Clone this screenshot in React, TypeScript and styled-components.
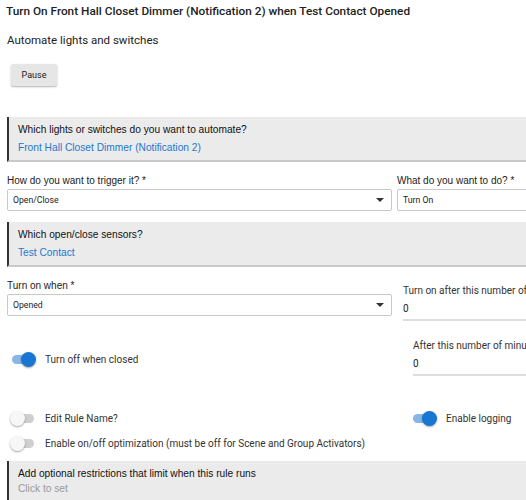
import React from 'react'
import styled, { createGlobalStyle } from 'styled-components'

const GlobalStyle = createGlobalStyle`
  *, *::before, *::after {
    box-sizing: border-box;
  }
  html, body {
    margin: 0;
    padding: 0;
    background: #fff;
    overflow: hidden;
  }
  body {
    font-family: Roboto, "Liberation Sans", Arial, sans-serif;
    color: #222;
  }
`

const Page = styled.div`
  width: 760px;
  padding: 0 0 0 7px;
`

const Title = styled.h1`
  margin: 0 0 0 -1px;
  padding-top: 3px;
  font-size: 11.8px;
  line-height: 16px;
  font-weight: 500;
  color: #222;
`

const Subtitle = styled.div`
  margin-top: 11px;
  font-size: 11.5px;
  line-height: 20px;
  color: #222;
`

const PauseButton = styled.button`
  display: block;
  margin: 14px 0 0 4px;
  width: 46px;
  height: 22px;
  border: none;
  border-radius: 2px;
  background: #e6e6e6;
  box-shadow: 0 1px 2px rgba(0, 0, 0, 0.3);
  font-family: Roboto, sans-serif;
  font-size: 9px;
  color: #222;
  padding: 0;
`

const Panel = styled.div<{ $top: number; $compact?: boolean }>`
  margin-top: ${(p) => p.$top}px;
  background: #ebebeb;
  border-left: 2px solid #333;
  border-bottom: 2px solid #c9c9c9;
  padding: ${(p) => (p.$compact ? '5px 0 4px 9px' : '4px 0 3px 9px')};
  font-family: "Liberation Sans", Arial, sans-serif;
  font-size: 10.2px;
  line-height: ${(p) => (p.$compact ? '16px' : '18px')};
`

const PanelTitle = styled.div`
  color: #111;
`

const PanelValue = styled.div<{ $muted?: boolean }>`
  color: ${(p) => (p.$muted ? '#9a9a9a' : '#1f78d1')};
  line-height: ${(p) => (p.$muted ? '14px' : '18px')};
`

const FieldRow = styled.div<{ $top: number; $cols: string }>`
  margin-top: ${(p) => p.$top}px;
  display: grid;
  grid-template-columns: ${(p) => p.$cols};
  align-items: start;
`

const Label = styled.div`
  font-family: "Liberation Sans", Arial, sans-serif;
  font-size: 10px;
  line-height: 16px;
  color: #222;
  white-space: nowrap;
`

const Select = styled.div<{ $width?: number }>`
  width: ${(p) => (p.$width ? `${p.$width}px` : 'auto')};
  height: 22px;
  border: 1px solid #c8c8c8;
  border-radius: 2px;
  display: flex;
  align-items: center;
  justify-content: space-between;
  padding: 0 7px 0 5px;
  font-size: 8.7px;
  color: #222;
  background: #fff;
`

const Caret = styled.span`
  width: 0;
  height: 0;
  border-left: 4px solid transparent;
  border-right: 4px solid transparent;
  border-top: 4px solid #333;
`

const LineField = styled.div<{ $top: number }>`
  margin-top: ${(p) => p.$top}px;
`

const LineLabel = styled.div`
  font-size: 10px;
  line-height: 16px;
  color: #333;
  white-space: nowrap;
`

const LineInput = styled.div`
  margin-top: 2px;
  font-size: 10px;
  line-height: 16px;
  padding-bottom: 2px;
  border-bottom: 2px solid #ddd;
  color: #222;
`

const ToggleLine = styled.div<{ $top?: number }>`
  margin-top: ${(p) => p.$top ?? 0}px;
  display: flex;
  align-items: center;
  gap: 11px;
  height: 15px;
  font-size: 10px;
  color: #333;
  white-space: nowrap;
`

const Track = styled.span<{ $on: boolean }>`
  position: relative;
  margin-left: 5px;
  width: 22px;
  height: 9px;
  border-radius: 5px;
  background: ${(p) => (p.$on ? '#8ab6e6' : '#cfcfcf')};
  flex: none;
`

const Thumb = styled.span<{ $on: boolean }>`
  position: absolute;
  top: -3px;
  left: ${(p) => (p.$on ? '9px' : '-2px')};
  width: 15px;
  height: 15px;
  border-radius: 50%;
  background: ${(p) => (p.$on ? '#1976d2' : '#f7f7f7')};
  box-shadow: 0 1px 2px rgba(0, 0, 0, 0.35);
`

function Toggle({ on, label, top }: { on: boolean; label: string; top?: number }) {
  return (
    <ToggleLine $top={top}>
      <Track $on={on}>
        <Thumb $on={on} />
      </Track>
      {label}
    </ToggleLine>
  )
}

export default function App() {
  return (
    <Page>
      <GlobalStyle />
      <Title>Turn On Front Hall Closet Dimmer (Notification 2) when Test Contact Opened</Title>
      <Subtitle>Automate lights and switches</Subtitle>
      <PauseButton type="button">Pause</PauseButton>

      <Panel $top={31}>
        <PanelTitle>Which lights or switches do you want to automate?</PanelTitle>
        <PanelValue>Front Hall Closet Dimmer (Notification 2)</PanelValue>
      </Panel>

      <FieldRow $top={11} $cols="385px 1fr">
        <div>
          <Label>How do you want to trigger it? *</Label>
          <Select>
            Open/Close
            <Caret />
          </Select>
        </div>
        <div style={{ marginLeft: 5 }}>
          <Label>What do you want to do? *</Label>
          <Select>Turn On</Select>
        </div>
      </FieldRow>

      <Panel $top={11}>
        <PanelTitle>Which open/close sensors?</PanelTitle>
        <PanelValue>Test Contact</PanelValue>
      </Panel>

      <FieldRow $top={11} $cols="396px 1fr">
        <div>
          <Label>Turn on when *</Label>
          <Select $width={385}>
            Opened
            <Caret />
          </Select>
        </div>
        <LineField $top={5}>
          <LineLabel>Turn on after this number of seconds</LineLabel>
          <LineInput>0</LineInput>
        </LineField>
      </FieldRow>

      <FieldRow $top={17} $cols="406px 1fr">
        <Toggle on top={14} label="Turn off when closed" />
        <LineField $top={0}>
          <LineLabel>After this number of minutes</LineLabel>
          <LineInput>0</LineInput>
        </LineField>
      </FieldRow>

      <FieldRow $top={35} $cols="401px 1fr">
        <Toggle on={false} label="Edit Rule Name?" />
        <Toggle on label="Enable logging" />
      </FieldRow>

      <FieldRow $top={10} $cols="1fr">
        <Toggle on={false} label="Enable on/off optimization (must be off for Scene and Group Activators)" />
      </FieldRow>

      <Panel $top={10} $compact>
        <PanelTitle>Add optional restrictions that limit when this rule runs</PanelTitle>
        <PanelValue $muted>Click to set</PanelValue>
      </Panel>
    </Page>
  )
}
